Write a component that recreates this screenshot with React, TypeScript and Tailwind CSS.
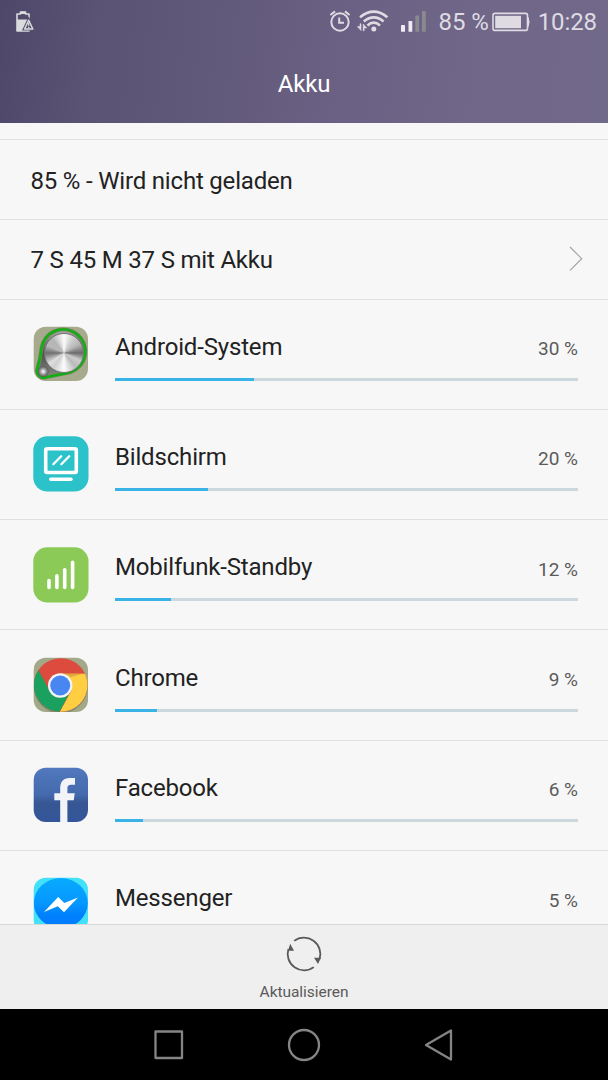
import type { ReactNode } from 'react'

type BatteryApp = {
  name: string
  percent: number
  icon: ReactNode
}

function SystemIcon() {
  return (
    <div className="relative h-14 w-14">
      <svg viewBox="0 0 56 56" className="h-14 w-14">
        <defs>
          <radialGradient id="knob">
            <stop offset="0" stopColor="#fff" />
            <stop offset="0.5" stopColor="#a5a5a5" />
            <stop offset="1" stopColor="#555" />
          </radialGradient>
          <linearGradient id="rim" x1="0" y1="0" x2="0" y2="1">
            <stop offset="0" stopColor="#aaada4" />
            <stop offset="0.5" stopColor="#4b4b4b" />
            <stop offset="1" stopColor="#8a8c84" />
          </linearGradient>
        </defs>
        <rect x="0.7" y="0.7" width="54.3" height="54.3" rx="12" fill="#a7aa8c" />
        <path
          d="M8.6 21.5 A22 22 0 1 1 38 46 Q35 47 13 51.2 A6.8 6.8 0 0 1 4.2 43 Q7.5 33 8.6 21.5Z"
          fill="url(#rim)"
          stroke="#7b8265"
          strokeWidth="3.8"
        />
        <path
          d="M8.6 21.5 A22 22 0 1 1 38 46 Q35 47 13 51.2 A6.8 6.8 0 0 1 4.2 43 Q7.5 33 8.6 21.5Z"
          fill="none"
          stroke="#10b012"
          strokeWidth="2.5"
        />
        <circle cx="10.2" cy="45.5" r="5.4" fill="url(#knob)" />
      </svg>
      <div className="absolute top-[6.5px] left-[10.5px] h-10 w-10 rounded-full border border-[#777] bg-[conic-gradient(#fcfcfc,#d0d0d0_30deg,#b5b5b5_60deg,#6a6a6a_90deg,#cdcdcd_115deg,#bababa_140deg,#fcfcfc_180deg,#cfcfcf_215deg,#dedede_235deg,#6e6e6e_270deg,#b9b9b9_295deg,#b5b5b5_320deg,#fcfcfc)]" />
    </div>
  )
}

function ScreenIcon() {
  return (
    <svg viewBox="0 0 56 56" className="h-14 w-14" fill="none" stroke="#fff" strokeLinecap="round">
      <rect x="0.3" y="0.3" width="55.2" height="55.2" rx="14" fill="#2cc2c9" stroke="none" />
      <rect x="12.7" y="12.7" width="30.6" height="23.8" rx="1.5" strokeWidth="3.6" />
      <path d="M17.7 43.3H38" strokeWidth="3.4" />
      <path d="M20.3 28.2L28.2 20.3M28.3 28.2L36.2 20.3" strokeWidth="2.3" />
    </svg>
  )
}

function SignalIcon() {
  return (
    <svg viewBox="0 0 56 56" className="h-14 w-14">
      <rect x="0.3" y="0.3" width="55.2" height="55.2" rx="14" fill="#8bca56" />
      <path
        d="M16 33.5V40.5M23.9 28.8V40.5M31.7 22.8V40.5M39.6 15.2V40.5"
        stroke="#fff"
        strokeWidth="3.6"
        strokeLinecap="round"
      />
    </svg>
  )
}

function ChromeIcon() {
  return (
    <svg viewBox="0 0 56 56" className="h-14 w-14">
      <defs>
        <clipPath id="chrome-tile">
          <rect x="0.7" y="0.7" width="54.3" height="54.3" rx="12" />
        </clipPath>
        <clipPath id="chrome-disc">
          <circle cx="27.7" cy="28" r="26.8" />
        </clipPath>
      </defs>
      <g clipPath="url(#chrome-tile)">
        <rect width="56" height="56" fill="#a3a888" />
        <circle cx="27.7" cy="29.5" r="27" fill="#858a70" />
        <g clipPath="url(#chrome-disc)">
          <rect width="56" height="56" fill="#dc4b3e" />
          <path d="M-4 -4L16.5 33.5L27 40L37.3 34.5L24 60H-4Z" fill="#1aa15f" />
          <path d="M27 16.7H60V60H24L38.5 33.5Z" fill="#ffce43" />
          <path d="M27 16.7H50L38 20Z" fill="#e0a93b" />
        </g>
        <circle cx="27.2" cy="28.5" r="12.2" fill="#f4f4f4" />
        <circle cx="27.2" cy="28.5" r="10" fill="#4886f2" />
      </g>
    </svg>
  )
}

function FacebookIcon() {
  return (
    <svg viewBox="0 0 56 56" className="h-14 w-14">
      <defs>
        <linearGradient id="fb" x1="0" y1="0" x2="0" y2="1">
          <stop offset="0" stopColor="#5279bd" />
          <stop offset="0.5" stopColor="#4469ad" />
          <stop offset="0.65" stopColor="#375793" />
          <stop offset="1" stopColor="#34569a" />
        </linearGradient>
      </defs>
      <rect x="0.7" y="0.7" width="54.3" height="54.3" rx="12" fill="url(#fb)" />
      <path
        d="M27.2 55V33.2H21.3V26.2H27.2V21.5C27.2 14.5 30.5 11 36.5 11H42V17.8H38C35.3 17.8 34.4 19 34.4 21.3V26.2H41.7L40.8 33.2H34.4V55Z"
        fill="#f2f4f8"
      />
    </svg>
  )
}

function MessengerIcon() {
  return (
    <svg viewBox="0 0 56 56" className="h-14 w-14">
      <defs>
        <linearGradient id="msg" x1="0" y1="0" x2="0" y2="1">
          <stop offset="0" stopColor="#08aaff" />
          <stop offset="0.5" stopColor="#0598ff" />
          <stop offset="0.75" stopColor="#007ffc" />
          <stop offset="1" stopColor="#007cff" />
        </linearGradient>
        <clipPath id="msg-tile">
          <rect x="0.7" y="0.7" width="54.3" height="54.3" rx="12" />
        </clipPath>
      </defs>
      <g clipPath="url(#msg-tile)">
        <rect width="56" height="56" fill="#43e1f8" />
        <ellipse cx="27.8" cy="26" rx="27" ry="25" fill="url(#msg)" />
      </g>
      <path d="M11 35L25.2 20L31.3 26L45 20.6L31 35.2L24.8 29.2Z" fill="#fff" />
    </svg>
  )
}

const apps: BatteryApp[] = [
  { name: 'Android-System', percent: 30, icon: <SystemIcon /> },
  { name: 'Bildschirm', percent: 20, icon: <ScreenIcon /> },
  { name: 'Mobilfunk-Standby', percent: 12, icon: <SignalIcon /> },
  { name: 'Chrome', percent: 9, icon: <ChromeIcon /> },
  { name: 'Facebook', percent: 6, icon: <FacebookIcon /> },
  { name: 'Messenger', percent: 5, icon: <MessengerIcon /> },
]

function StatusBar() {
  return (
    <div className="flex h-11 items-center pr-[11px] pl-4 text-[#dedbe3]">
      <svg viewBox="0 0 18 22" className="h-[22px] w-[18px]">
        <path
          d="M1 3H4.5V1H9.5V3H13V20H1Z"
          fill="none"
          stroke="#d9dbdd"
          strokeWidth="1.6"
          strokeLinejoin="round"
        />
        <path d="M4.5 0.5H9.5V3H4.5ZM1 8.5H13V20H1Z" fill="#d9dbdd" />
        <path d="M12.7 8.3L17.4 18.2H8Z" fill="#56506f" stroke="#56506f" strokeWidth="2.6" />
        <path d="M12.7 9.3L16.8 18H8.6Z" fill="#56506f" stroke="#d9dbdd" strokeWidth="1.5" strokeLinejoin="round" />
        <path d="M12.7 11.8V14.8M12.7 15.8V17.2" stroke="#d9dbdd" strokeWidth="1.3" />
      </svg>
      <svg viewBox="0 0 22 24" className="ml-auto h-6 w-[22px]" fill="none" stroke="currentColor" strokeWidth="2">
        <circle cx="11" cy="12" r="8.7" />
        <path d="M10.2 7.5V12.8H15M1.4 5L6 1.4M20.6 5L16 1.4" />
      </svg>
      <svg viewBox="0 0 32 24" className="ml-[6px] h-6 w-8" fill="none" stroke="currentColor" strokeWidth="2.6">
        <path d="M3 7.2Q16.8 -3.8 30.4 7.2M6.8 11.4Q16.8 3.2 26.6 11.4M10.4 15.4Q16.8 10 23 15.4" />
        <circle cx="16.8" cy="19" r="2.5" fill="currentColor" stroke="none" />
        <path d="M4 13.8V20.5L0.4 16.6H3V13.8ZM6.2 20.8V14L9.8 17.9H7.2V20.8Z" fill="currentColor" strokeWidth="0.6" />
      </svg>
      <svg viewBox="0 0 26 22" className="ml-3 h-[22px] w-[26px]" fill="#eeecf2">
        <rect x="0" y="14" width="4" height="6.8" rx="0.6" />
        <rect x="7.5" y="10" width="3.8" height="10.8" rx="0.6" />
        <rect x="14.3" y="4.6" width="3.8" height="16.2" rx="0.6" fill="#8b8990" />
        <rect x="21" y="0" width="3.8" height="20.8" rx="0.6" fill="#8b8990" />
      </svg>
      <span className="ml-3 text-2xl tracking-[-0.1px] whitespace-nowrap">85 %</span>
      <svg viewBox="0 0 38 20" className="ml-[3px] h-5 w-[38px]">
        <rect x="1" y="1.4" width="34.5" height="17" rx="2" fill="none" stroke="currentColor" strokeWidth="1.6" />
        <path d="M36 5.5Q38.2 10 36 14.5Z" fill="currentColor" stroke="currentColor" />
        <rect x="3.2" y="3.8" width="25.8" height="12.4" fill="currentColor" />
      </svg>
      <span className="ml-2 text-2xl tracking-[-0.1px]">10:28</span>
    </div>
  )
}

function AppRow({ app }: { app: BatteryApp }) {
  return (
    <div className="flex h-[110.3px] shrink-0 border-t border-[#e0e0e0] pr-[30px] pl-[33px]">
      <div className="mt-[26.5px] h-14 w-14 shrink-0">{app.icon}</div>
      <div className="ml-[26px] flex-1 pt-[31.2px]">
        <div className="flex h-8 items-center justify-between">
          <span className="text-2xl tracking-[-0.17px] text-[#222]">{app.name}</span>
          <span className="pt-1 text-[19px] tracking-normal text-[#5b5b5b]">{app.percent} %</span>
        </div>
        <div className="mt-[15px] h-[3px] bg-[#cdd7de]">
          <div className="h-full bg-[#39b3e5]" style={{ width: `${app.percent}%` }} />
        </div>
      </div>
    </div>
  )
}

export default function App() {
  return (
    <div className="flex h-[1080px] w-[608px] flex-col overflow-hidden bg-[#f7f7f7] font-[Roboto,sans-serif]">
      <header className="h-[123px] shrink-0 bg-[linear-gradient(97deg,#4f476a_0%,#5a5373_16%,#625a7b_38%,#6b6184_58%,#716788_80%,#71698a_100%)]">
        <StatusBar />
        <h1 className="flex h-20 items-center justify-center text-2xl tracking-[-0.2px] text-white">Akku</h1>
      </header>

      <main className="flex min-h-0 flex-1 flex-col overflow-hidden pt-4 text-2xl tracking-[-0.19px] text-[#222]">
        <div className="flex h-20 shrink-0 items-center border-t border-[#e0e0e0] px-[30.5px] pt-[2px]">
          85 % - Wird nicht geladen
        </div>
        <div className="flex h-[79.5px] shrink-0 items-center justify-between border-t border-[#e0e0e0] pt-[2px] pr-[25px] pl-[30.5px]">
          7 S 45 M 37 S mit Akku
          <svg viewBox="0 0 14 26" className="mb-[2px] h-[26px] w-[14px]" fill="none" stroke="#a5a5a5" strokeWidth="1.2">
            <path d="M1 1L12.7 12.7L1 24.4" />
          </svg>
        </div>
        {apps.map((app) => (
          <AppRow key={app.name} app={app} />
        ))}
      </main>

      <footer className="flex h-[85px] shrink-0 flex-col items-center border-t border-[#d9d9d9] bg-[#efefef] pt-[9px] text-[#5a5a5a]">
        <svg viewBox="0 0 40 40" className="h-10 w-10" fill="none" stroke="currentColor" strokeWidth="1.8">
          <path d="M10.2 6.9A16.4 16.4 0 0 1 35.6 25M29.8 33.1A16.4 16.4 0 0 1 4.4 15" />
          <path d="M30 23.7H37L34 30ZM4 16.8H10L6.2 9.8Z" fill="currentColor" stroke="none" />
        </svg>
        <span className="mt-[6px] text-[15.5px] leading-6 tracking-[-0.05px]">Aktualisieren</span>
      </footer>

      <nav className="flex h-[71px] shrink-0 items-center justify-center gap-[103px] bg-black">
        {['M2.5 2.5H29V29H2.5Z', 'M16 1A15 15 0 1 1 16 31A15 15 0 1 1 16 1Z', 'M3 16L28 1.5V30.5Z'].map((d) => (
          <svg key={d} viewBox="0 0 32 32" className="h-8 w-8 overflow-visible" fill="none" stroke="#858585" strokeWidth="2.3" strokeLinejoin="round">
            <path d={d} />
          </svg>
        ))}
      </nav>
    </div>
  )
}
